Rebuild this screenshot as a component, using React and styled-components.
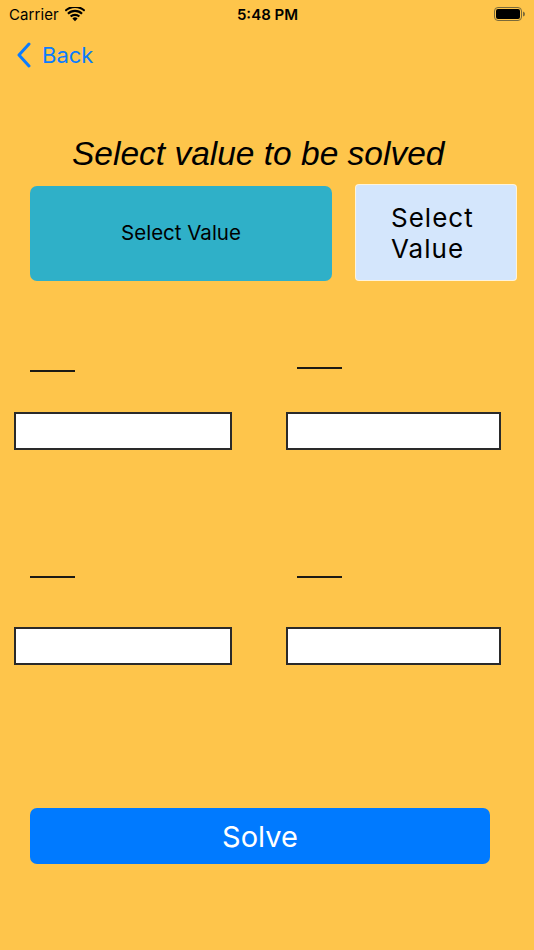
import React from "react";
import styled, { createGlobalStyle } from "styled-components";

const Global = createGlobalStyle`
  html, body { margin: 0; padding: 0; background: #FEC54B; }
  * { box-sizing: border-box; }
`;

const Screen = styled.div`
  width: 534px;
  height: 950px;
  background: #FEC54B;
  display: flex;
  flex-direction: column;
  font-family: Inter, "Liberation Sans", sans-serif;
  color: #000;
  overflow: hidden;
`;

const StatusBar = styled.div`
  height: 28px;
  display: grid;
  grid-template-columns: 1fr auto 1fr;
  align-items: center;
  padding: 0 8px 0 9px;
  font-size: 15px;
`;

const Carrier = styled.div`
  display: flex;
  align-items: center;
  gap: 6px;
  font-weight: 400;
  letter-spacing: 0.1px;
`;

const Time = styled.div`
  font-weight: 600;
`;

const Right = styled.div`
  display: flex;
  justify-content: flex-end;
  align-items: center;
`;

const Nav = styled.div`
  height: 54px;
  display: flex;
  align-items: center;
  padding-left: 16px;
  gap: 10px;
  color: #0A7CFF;
  font-size: 22px;
`;

const Title = styled.h1`
  margin: 54px 0 0 72px;
  font-family: "Liberation Sans", Arial, sans-serif;
  font-style: italic;
  font-weight: 400;
  font-size: 33.5px;
  line-height: 36px;
  white-space: nowrap;
`;

const ButtonRow = styled.div`
  display: flex;
  align-items: flex-start;
  gap: 24px;
  margin: 13px 0 0 30px;
`;

const ValueButton = styled.button`
  font-family: Inter, "Liberation Sans", sans-serif;
  border: none;
  cursor: pointer;
  color: #000;
  width: ${(p) => p.$w}px;
  height: 95px;
  margin-top: ${(p) => p.$top || 0}px;
  background: ${(p) => p.$bg};
  border-radius: ${(p) => p.$r}px;
  font-size: ${(p) => p.$fs}px;
  letter-spacing: ${(p) => p.$ls || 0}px;
  text-align: ${(p) => p.$align};
  padding: ${(p) => p.$pad};
  line-height: ${(p) => p.$lh};
  ${(p) => p.$outline && "box-shadow: 0 0 0 1px rgba(255,255,255,0.8);"}
`;

const FieldGrid = styled.div`
  display: grid;
  grid-template-columns: 218px 215px;
  column-gap: 54px;
  margin-left: 14px;
  margin-top: ${(p) => p.$top}px;
`;

const Cell = styled.div`
  display: flex;
  flex-direction: column;
`;

const Dash = styled.div`
  width: 45px;
  height: 2px;
  background: #1c1a14;
  margin-left: ${(p) => p.$left}px;
  margin-top: ${(p) => p.$top}px;
  margin-bottom: ${(p) => p.$bottom}px;
`;

const Field = styled.input`
  width: 100%;
  height: 38px;
  border: 2px solid #2a2a2a;
  background: #fff;
  border-radius: 0;
  padding: 0 6px;
  font-size: 16px;
  outline: none;
`;

const Solve = styled.button`
  margin: 143px 0 0 30px;
  width: 460px;
  height: 56px;
  border: none;
  border-radius: 7px;
  background: #007AFF;
  color: #fff;
  font-family: Inter, "Liberation Sans", sans-serif;
  font-size: 29px;
  font-weight: 400;
  cursor: pointer;
`;

const Wifi = () => (
  <svg width="20" height="15" viewBox="0 0 20 15">
    <path d="M10 14.2 L7.4 11.4 A3.8 3.8 0 0 1 12.6 11.4 Z" fill="#000" />
    <path d="M4.9 8.7 A7.4 7.4 0 0 1 15.1 8.7 L13.6 10.3 A5.3 5.3 0 0 0 6.4 10.3 Z" fill="#000" />
    <path d="M2.2 5.9 A11.2 11.2 0 0 1 17.8 5.9 L16.3 7.5 A9.1 9.1 0 0 0 3.7 7.5 Z" fill="#000" />
    <path d="M-0.4 3.1 A15 15 0 0 1 20.4 3.1 L19 4.6 A13 13 0 0 0 1 4.6 Z" fill="#000" />
  </svg>
);

const Battery = () => (
  <svg width="32" height="14" viewBox="0 0 32 14">
    <rect x="0.5" y="0.5" width="27" height="13" rx="3.5" fill="none" stroke="#7a6a3a" strokeWidth="1" />
    <rect x="2" y="2" width="24" height="10" rx="2" fill="#000" />
    <path d="M29 4.5 Q31 5 31 7 Q31 9 29 9.5 Z" fill="#7a6a3a" />
  </svg>
);

const Chevron = () => (
  <svg width="16" height="26" viewBox="0 0 16 26">
    <path d="M13 2 L3 13 L13 24" fill="none" stroke="#0A7CFF" strokeWidth="3" strokeLinecap="round" strokeLinejoin="round" />
  </svg>
);

export default function App() {
  return (
    <Screen>
      <Global />
      <StatusBar>
        <Carrier>
          Carrier <Wifi />
        </Carrier>
        <Time>5:48 PM</Time>
        <Right>
          <Battery />
        </Right>
      </StatusBar>
      <Nav>
        <Chevron />
        <span>Back</span>
      </Nav>
      <Title>Select value to be solved</Title>
      <ButtonRow>
        <ValueButton $w={302} $top={1} $bg="#2FB0C8" $r={7} $fs={20.5} $align="center" $pad="0" $lh="1.2">
          Select Value
        </ValueButton>
        <ValueButton $w={160} $bg="#D4E6FC" $r={3} $fs={26} $ls={1} $align="left" $pad="0 0 0 35px" $lh="31px" $outline>
          Select
          <br />
          Value
        </ValueButton>
      </ButtonRow>
      <FieldGrid $top={89}>
        <Cell>
          <Dash $left={16} $top={0} $bottom={40} />
          <Field />
        </Cell>
        <Cell>
          <Dash $left={11} $top={-3} $bottom={43} />
          <Field />
        </Cell>
      </FieldGrid>
      <FieldGrid $top={126}>
        <Cell>
          <Dash $left={16} $top={0} $bottom={49} />
          <Field />
        </Cell>
        <Cell>
          <Dash $left={11} $top={0} $bottom={49} />
          <Field />
        </Cell>
      </FieldGrid>
      <Solve>Solve</Solve>
    </Screen>
  );
}
